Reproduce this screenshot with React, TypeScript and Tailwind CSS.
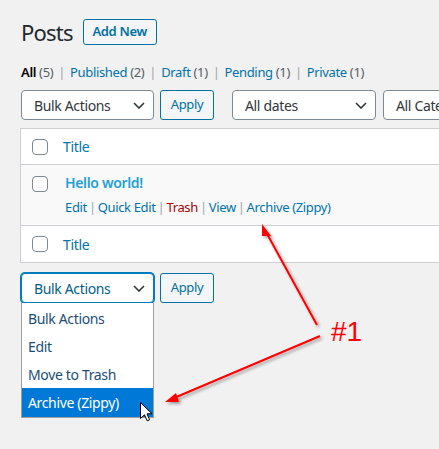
import React from "react";

const font = { fontFamily: '"Segoe UI", "Noto Sans", sans-serif', letterSpacing: "-0.35px" };

function Chevron({ color = "#32373c" }: { color?: string }) {
  return (
    <svg width="12" height="7" viewBox="0 0 12 7" className="shrink-0">
      <path d="M1 1 L6 6 L11 1" fill="none" stroke={color} strokeWidth="1.6" />
    </svg>
  );
}

function Select({ label, w, focused = false }: { label: string; w: string; focused?: boolean }) {
  return (
    <div
      className={
        "shrink-0 h-[30px] bg-white rounded-[4px] flex items-center justify-between pl-[12px] pr-[8px] text-[14px] " +
        w +
        (focused
          ? " border border-[#007cba] shadow-[0_0_0_1px_#007cba] text-[#016087]"
          : " border border-[#7e8993] text-[#32373c]")
      }
    >
      <span className="whitespace-nowrap">{label}</span>
      <Chevron />
    </div>
  );
}

function Apply() {
  return (
    <div className="shrink-0 h-[30px] w-[54px] rounded-[3px] border border-[#0071a1] bg-[#f3f5f6] text-[#0071a1] text-[13px] flex items-center justify-center">
      Apply
    </div>
  );
}

function Checkbox() {
  return <div className="w-[16px] h-[16px] rounded-[4px] border border-[#7e8993] bg-white shrink-0" />;
}

function Sep({ m = "mx-[5px]" }: { m?: string }) {
  return <span className={"text-[#a0a5aa] " + m}>|</span>;
}

export default function App() {
  return (
    <div className="relative w-[439px] h-[449px] overflow-hidden bg-[#f1f1f1] pl-[21px] pt-[19px]" style={font}>
      {/* Heading */}
      <div className="flex items-center h-[26px]">
        <h1 className="text-[22px] tracking-[-0.8px] text-[#23282d] font-normal leading-none">Posts</h1>
        <div className="ml-[10px] h-[26px] w-[74px] border border-[#0071a1] rounded-[3px] bg-[#f3f5f6] text-[#0071a1] text-[13px] font-semibold flex items-center justify-center">
          Add New
        </div>
      </div>

      {/* subsubsub */}
      <div className="mt-[17px] h-[20px] leading-[20px] text-[13px] whitespace-nowrap text-[#646970]">
        <span className="text-black font-semibold">All</span> <span className="text-[#555d66]">(5)</span>
        <Sep />
        <span className="text-[#0073aa]">Published</span> <span className="text-[#555d66]">(2)</span>
        <Sep />
        <span className="text-[#0073aa]">Draft</span> <span className="text-[#555d66]">(1)</span>
        <Sep />
        <span className="text-[#0073aa]">Pending</span> <span className="text-[#555d66]">(1)</span>
        <Sep />
        <span className="text-[#0073aa]">Private</span> <span className="text-[#555d66]">(1)</span>
      </div>

      {/* top tablenav */}
      <div className="mt-[8px] flex items-center">
        <Select label="Bulk Actions" w="w-[133px]" />
        <div className="ml-[6px] shrink-0">
          <Apply />
        </div>
        <div className="ml-[18px] shrink-0">
          <Select label="All dates" w="w-[144px]" />
        </div>
        <div className="ml-[7px] shrink-0">
          <Select label="All Categories" w="w-[160px]" />
        </div>
      </div>

      {/* table */}
      <div className="mt-[8px] -ml-[1px] w-[460px] border border-[#ccd0d4] bg-white">
        <div className="h-[36px] border-b border-[#ccd0d4] flex items-center">
          <div className="pl-[11px] w-[42px]">
            <Checkbox />
          </div>
          <span className="text-[14px] text-[#0073aa]">Title</span>
        </div>
        <div className="h-[61px] border-b border-[#ccd0d4] bg-[#f9f9f9] flex">
          <div className="pl-[11px] w-[42px] pt-[11px]">
            <Checkbox />
          </div>
          <div className="pl-[2px] pt-[8px]">
            <div className="text-[14px] font-semibold text-[#1fa0d4] leading-[20px]">Hello world!</div>
            <div className="mt-[4px] text-[13px] leading-[20px] whitespace-nowrap">
              <span className="text-[#0073aa]">Edit</span>
              <Sep m="mx-[2px]" />
              <span className="text-[#0073aa]">Quick Edit</span>
              <Sep m="mx-[2px]" />
              <span className="text-[#a00]">Trash</span>
              <Sep m="mx-[2px]" />
              <span className="text-[#0073aa]">View</span>
              <Sep m="mx-[2px]" />
              <span className="text-[#0073aa]">Archive (Zippy)</span>
            </div>
          </div>
        </div>
        <div className="h-[36px] flex items-center">
          <div className="pl-[11px] w-[42px]">
            <Checkbox />
          </div>
          <span className="text-[14px] text-[#0073aa]">Title</span>
        </div>
      </div>

      {/* bottom tablenav */}
      <div className="mt-[10px] flex items-center relative">
        <Select label="Bulk Actions" w="w-[133px]" focused />
        <div className="ml-[6px] shrink-0">
          <Apply />
        </div>
        {/* dropdown */}
        <div className="absolute left-0 top-[30px] w-[133px] bg-white border border-[#a0a0a0] border-t-0 pt-[1px] text-[14px] text-[#1b4e75]">
          <div className="h-[28px] flex items-center pl-[6px]">Bulk Actions</div>
          <div className="h-[28px] flex items-center pl-[6px]">Edit</div>
          <div className="h-[28px] flex items-center pl-[6px]">Move to Trash</div>
          <div className="h-[29px] flex items-center pl-[6px] bg-[#0078d7] text-white">Archive (Zippy)</div>
        </div>
      </div>

      {/* annotation arrows */}
      <svg className="absolute left-0 top-0 pointer-events-none" width="439" height="449" viewBox="0 0 439 449">
        <defs>
          <filter id="sh" x="-20%" y="-20%" width="140%" height="140%">
            <feDropShadow dx="2" dy="2" stdDeviation="1.5" floodColor="#000" floodOpacity="0.35" />
          </filter>
        </defs>
        <g filter="url(#sh)">
          <line x1="317" y1="325" x2="266" y2="232" stroke="#ff0000" strokeWidth="2" />
          <polygon points="262,224 271,236 262,236" fill="#ff0000" />
          <line x1="320" y1="336" x2="174" y2="398" stroke="#ff0000" strokeWidth="2" />
          <polygon points="165,402 176,393 179,402" fill="#ff0000" />
        </g>
      </svg>
      <div
        className="absolute left-[331px] top-[318px] text-[28px] leading-none text-[#ff0000]"
        style={{ fontFamily: '"Liberation Sans", Arial, sans-serif', letterSpacing: "0" }}
      >
        #1
      </div>

      {/* cursor */}
      <svg className="absolute left-[140px] top-[402px]" width="13" height="20" viewBox="0 0 13 20">
        <path d="M0.5 0.5 L0.5 16.5 L4.5 12.8 L7.2 18.8 L9.6 17.8 L7 11.8 L12 11.8 Z" fill="#fff" stroke="#000" strokeWidth="1" />
      </svg>
    </div>
  );
}
